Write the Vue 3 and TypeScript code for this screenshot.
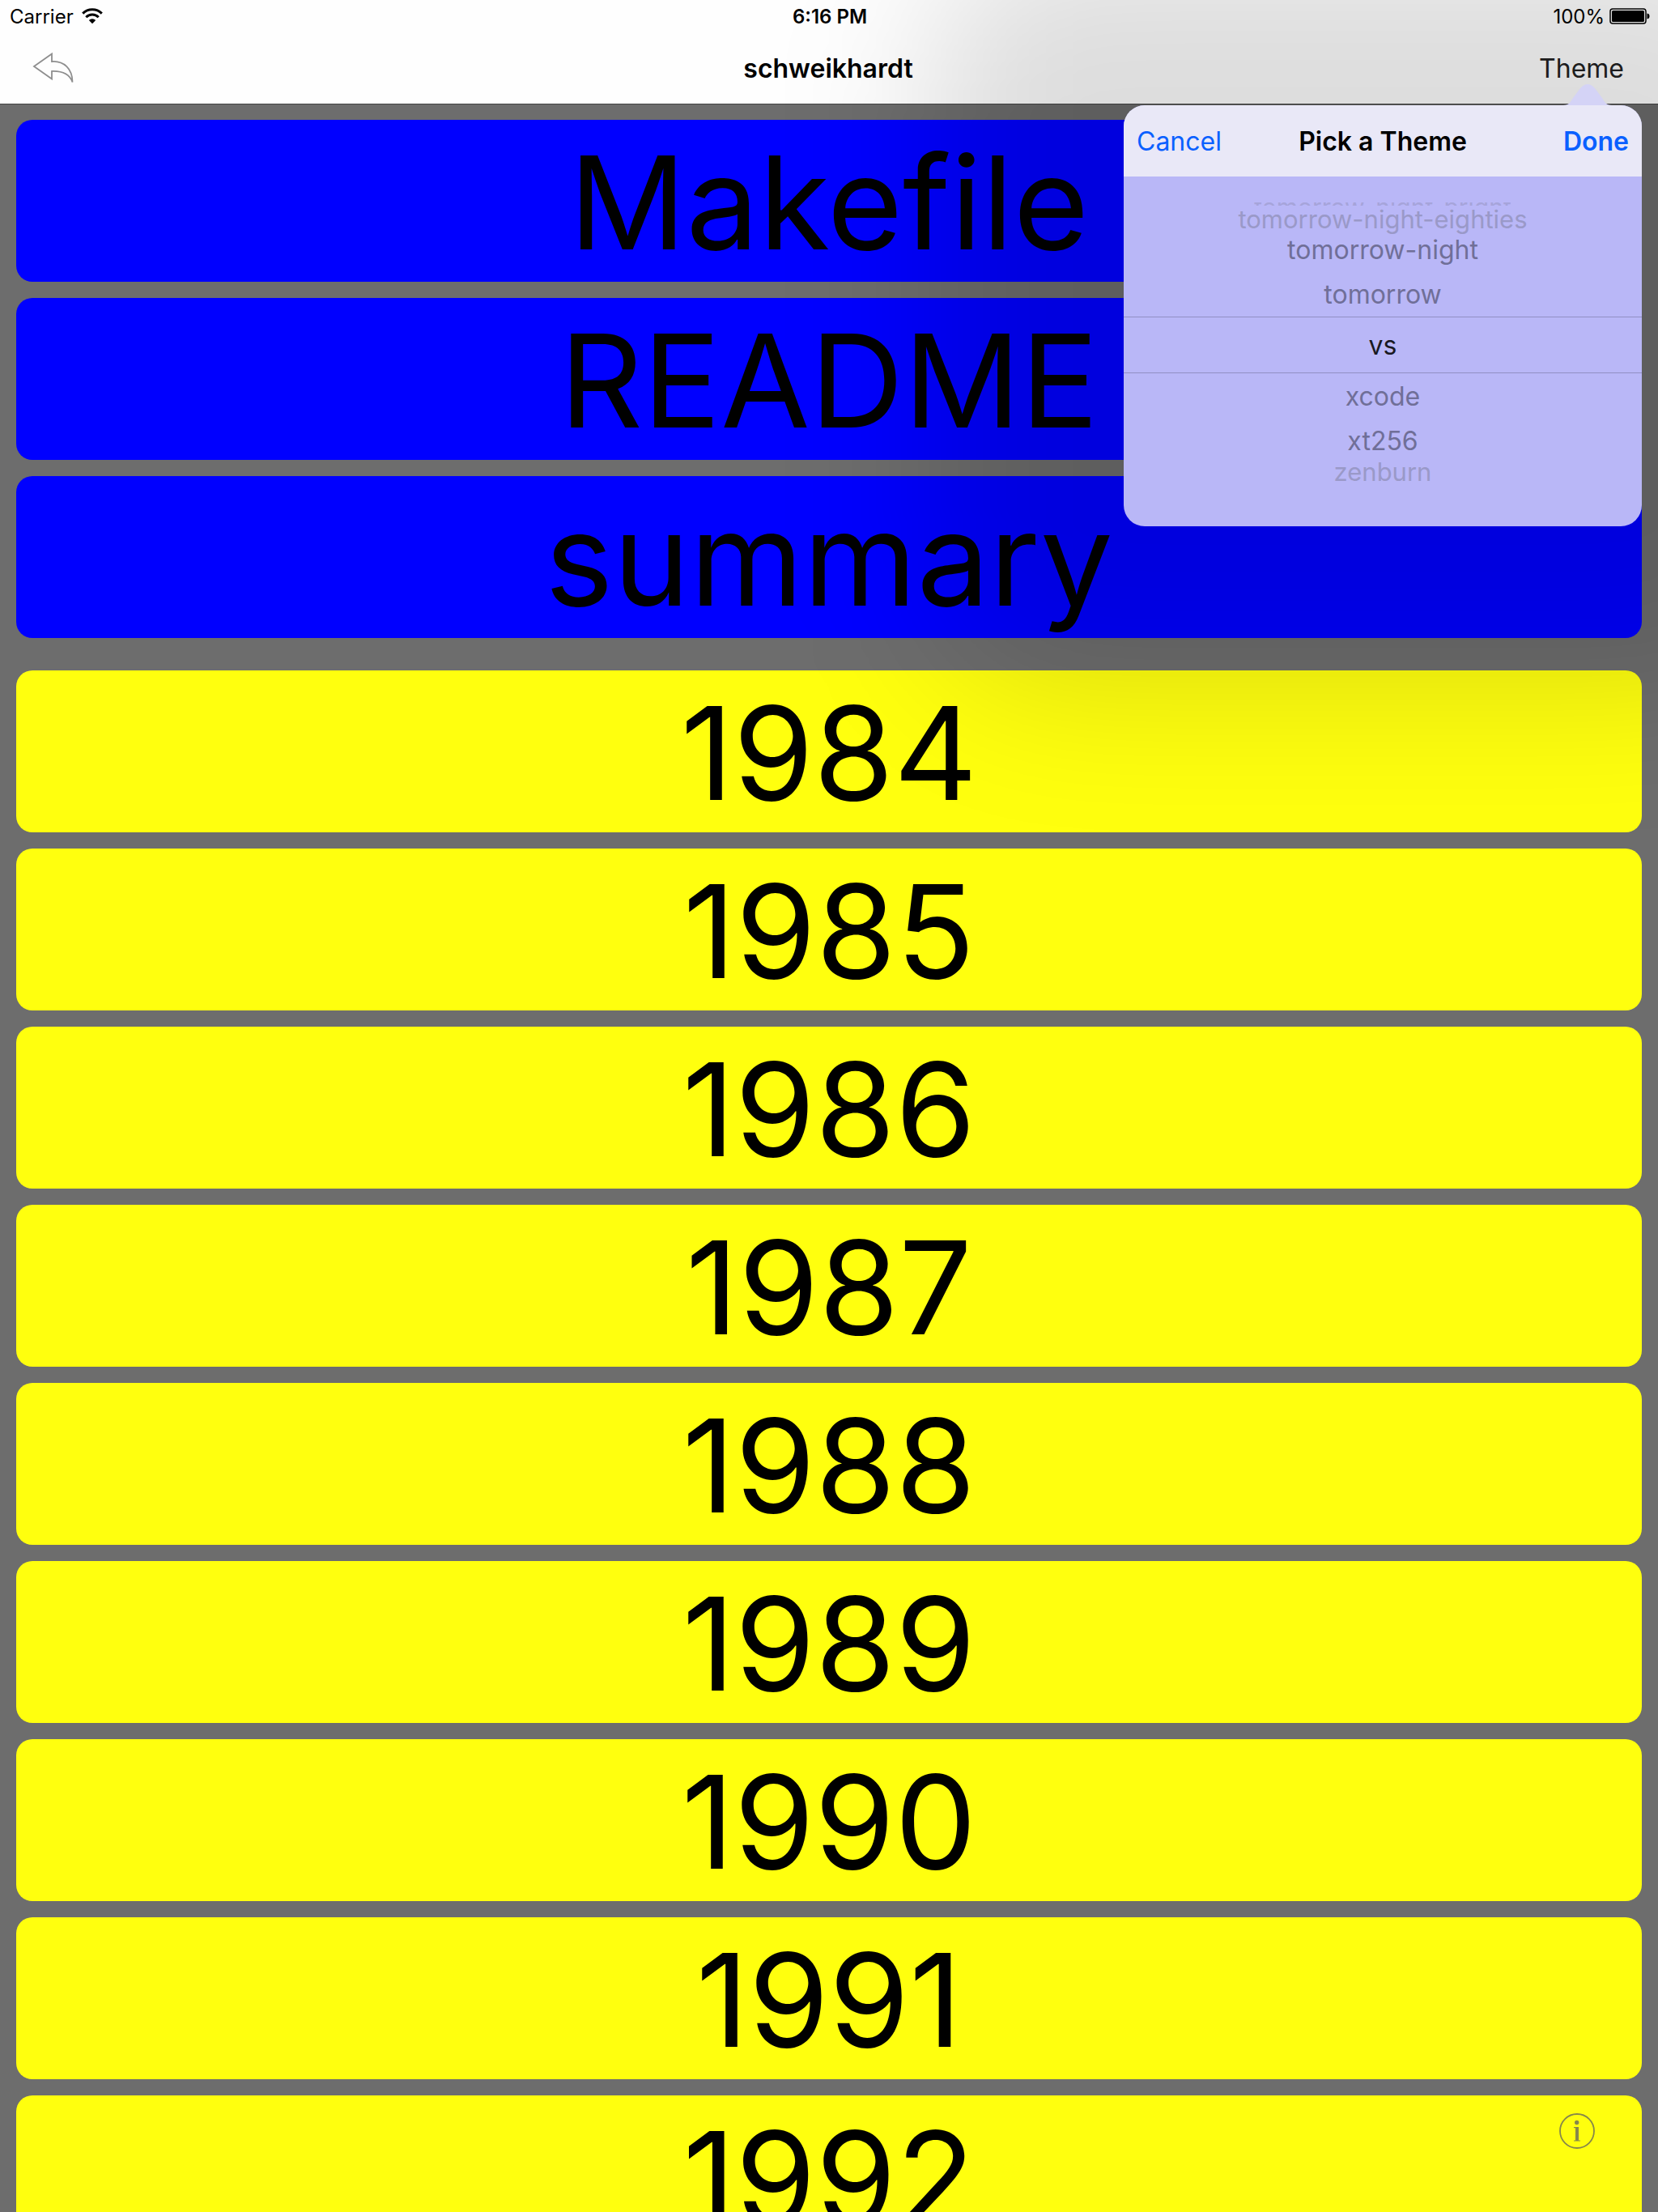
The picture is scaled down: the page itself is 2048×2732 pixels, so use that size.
<script setup lang="ts">
import { ref } from 'vue'

interface Section {
  kind: 'file' | 'folder'
  names: string[]
}

const sections: Section[] = [
  { kind: 'file', names: ['Makefile', 'README', 'summary'] },
  {
    kind: 'folder',
    names: ['1984', '1985', '1986', '1987', '1988', '1989', '1990', '1991', '1992'],
  },
]

interface Theme {
  name: string
  depth: number
}

// depth: how many rows the theme sits from the middle of the wheel
const themes: Theme[] = [
  { name: 'tomorrow-night-bright', depth: 4 },
  { name: 'tomorrow-night-eighties', depth: 3 },
  { name: 'tomorrow-night', depth: 2 },
  { name: 'tomorrow', depth: 1 },
  { name: 'vs', depth: 0 },
  { name: 'xcode', depth: 1 },
  { name: 'xt256', depth: 2 },
  { name: 'zenburn', depth: 3 },
]

const selected = ref('vs')
</script>

<template>
  <div class="app">
    <header class="top">
      <div class="status">
        <div class="status-side">
          <span>Carrier</span>
          <svg class="wifi" viewBox="0 0 26 20" aria-hidden="true">
            <path d="M1.2 6.6a17 17 0 0 1 23.6 0" fill="none" stroke="#000" stroke-width="3" />
            <path d="M5.3 11.2a11 11 0 0 1 15.4 0" fill="none" stroke="#000" stroke-width="3" />
            <path d="M13 19.2 8.8 14.9a6 6 0 0 1 8.4 0Z" />
          </svg>
        </div>
        <span class="clock">6:16 PM</span>
        <div class="status-side end">
          <span>100%</span>
          <svg class="battery" viewBox="0 0 50 20" aria-hidden="true">
            <rect x="1" y="1" width="44" height="18" rx="3" fill="none" stroke="#000" stroke-width="1.5" />
            <rect x="3" y="3" width="40" height="14" rx="1.5" />
            <path d="M46.5 6.5c2 .3 3 1.500 3 3.500s-1 3.200-3 3.500Z" />
          </svg>
        </div>
      </div>
      <nav class="bar">
        <button class="plain back" type="button" aria-label="Back">
          <svg viewBox="0 0 52 40" aria-hidden="true">
            <path
              d="M2 18 24 2.500V12C39 11 49.500 21 49.500 37.500 46.500 29 39 23.500 24 24V33.500Z"
              fill="none"
              stroke="#8e8e8e"
              stroke-width="1.800"
            />
          </svg>
        </button>
        <h1 class="title">schweikhardt</h1>
        <button class="plain theme" type="button">Theme</button>
      </nav>
    </header>

    <main class="list">
      <section v-for="s in sections" :key="s.kind" class="group">
        <button v-for="n in s.names" :key="n" type="button" class="card" :class="s.kind">
          {{ n }}
        </button>
      </section>
    </main>

    <button class="plain info" type="button" aria-label="Info">
      <svg viewBox="0 0 44 44" aria-hidden="true">
        <circle cx="22" cy="22" r="21" fill="none" stroke="#87874a" stroke-width="1.800" />
        <circle cx="21.700" cy="11.500" r="2.700" fill="#87874a" />
        <path d="M18 17h6v16.500h2v1H18v-1h2V18.200h-2Z" fill="#87874a" />
      </svg>
    </button>

    <div class="popover" role="dialog" aria-labelledby="picker-title">
      <svg class="pointer" viewBox="0 0 60 26" aria-hidden="true">
        <path d="M0 26C7 26 9 22 12 17L21 5Q30-5 39 5L48 17C51 22 53 26 60 26Z" fill="#d4d3f6" />
      </svg>
      <div class="pop-body">
        <div class="pop-head">
          <button class="plain action" type="button">Cancel</button>
          <h2 id="picker-title" class="title">Pick a Theme</h2>
          <button class="plain action done" type="button">Done</button>
        </div>
        <div class="wheel" role="radiogroup" aria-labelledby="picker-title">
          <label v-for="t in themes" :key="t.name" class="option" :class="'d' + t.depth">
            <input v-model="selected" type="radio" name="theme" :value="t.name" />
            <span>{{ t.name }}</span>
          </label>
          <div class="lens"></div>
        </div>
      </div>
    </div>
  </div>
</template>

<style>
body {
  margin: 0;
}
</style>

<style scoped>
.app {
  position: relative;
  display: flex;
  flex-direction: column;
  height: 100vh;
  overflow: hidden;
  background: #6d6d6d;
  color: #000;
  font-family: Inter, 'Liberation Sans', sans-serif;
}

button {
  font-family: inherit;
}

.plain {
  padding: 0;
  border: 0;
  background: none;
  font-size: 32px;
  color: #222;
}

.plain svg {
  display: block;
  width: 100%;
}

.top {
  flex: none;
  background: #fefefe;
  border-bottom: 1px solid #444;
}

.status {
  display: flex;
  align-items: center;
  height: 40px;
  padding: 0 10px 0 12px;
  font-size: 24px;
}

.status-side {
  display: flex;
  flex: 1;
  align-items: center;
  gap: 10px;
}

.end {
  justify-content: flex-end;
  gap: 6px;
}

.clock {
  font-weight: 600;
}

.wifi {
  width: 26px;
}

.battery {
  width: 50px;
}

.bar {
  display: flex;
  align-items: center;
  justify-content: space-between;
  height: 88px;
  padding: 0 42px 0 40px;
}

.back,
.theme {
  flex: 1;
  text-align: right;
}

.plain.back svg {
  width: 52px;
}

.title {
  margin: 0;
  font-size: 32px;
  font-weight: 600;
}

.list {
  display: flex;
  flex: 1;
  flex-direction: column;
  gap: 40px;
  min-height: 0;
  padding: 19px 20px 0;
  overflow: hidden;
}

.group {
  display: flex;
  flex: none;
  flex-direction: column;
  gap: 20px;
}

.card {
  height: 200px;
  padding: 4px 0 0;
  border: 0;
  border-radius: 20px;
  font-size: 160px;
  line-height: 196px;
  color: #000;
}

.file {
  background: #00f;
}

.folder {
  background: #ffff0e;
}

.info {
  position: absolute;
  right: 78px;
  bottom: 78px;
  width: 44px;
}

.popover {
  position: absolute;
  top: 130px;
  right: 20px;
  width: 640px;
}

/* wide, soft shade that falls on everything around the popover */
.popover::before {
  content: '';
  position: absolute;
  inset: -200px -200px -200px -240px;
  border-radius: 160px;
  background: rgba(0, 0, 0, 0.13);
  filter: blur(90px);
}

.pop-body {
  position: relative;
  border-radius: 26px;
  background: #b9b7f7;
}

.pointer {
  position: absolute;
  right: 37px;
  bottom: 100%;
  width: 60px;
}

.pop-head {
  display: flex;
  align-items: center;
  height: 88px;
  padding: 0 16px;
  border-radius: 26px 26px 0 0;
  background: #e9e8f7;
}

.action {
  flex: 1;
  color: #0a60ff;
  text-align: left;
}

.done {
  font-weight: 600;
  text-align: right;
}

.wheel {
  position: relative;
  display: flex;
  flex-direction: column;
  box-sizing: border-box;
  height: 432px;
  padding: 32px 0;
}

.option {
  display: flex;
  flex: none;
  align-items: center;
  justify-content: center;
  font-size: 32px;
  line-height: 30px;
  color: #706f98;
}

.option input {
  position: absolute;
  margin: 0;
  opacity: 0;
}

.d0 {
  height: 62px;
  color: #191922;
}

.d1 {
  height: 64px;
}

.d2 {
  height: 46px;
}

.d3 {
  height: 30px;
  font-size: 31px;
  color: #9a99c8;
}

/* only a sliver of this row shows before the wheel turns away */
.d4 {
  align-items: flex-start;
  height: 4px;
  margin-bottom: 2px;
  overflow: hidden;
  font-size: 30px;
  line-height: 12px;
  color: #a6a4da;
}

.lens {
  position: absolute;
  top: 173px;
  right: 0;
  left: 0;
  box-sizing: border-box;
  height: 70px;
  border: solid #918fc4;
  border-width: 1px 0;
  pointer-events: none;
}
</style>
